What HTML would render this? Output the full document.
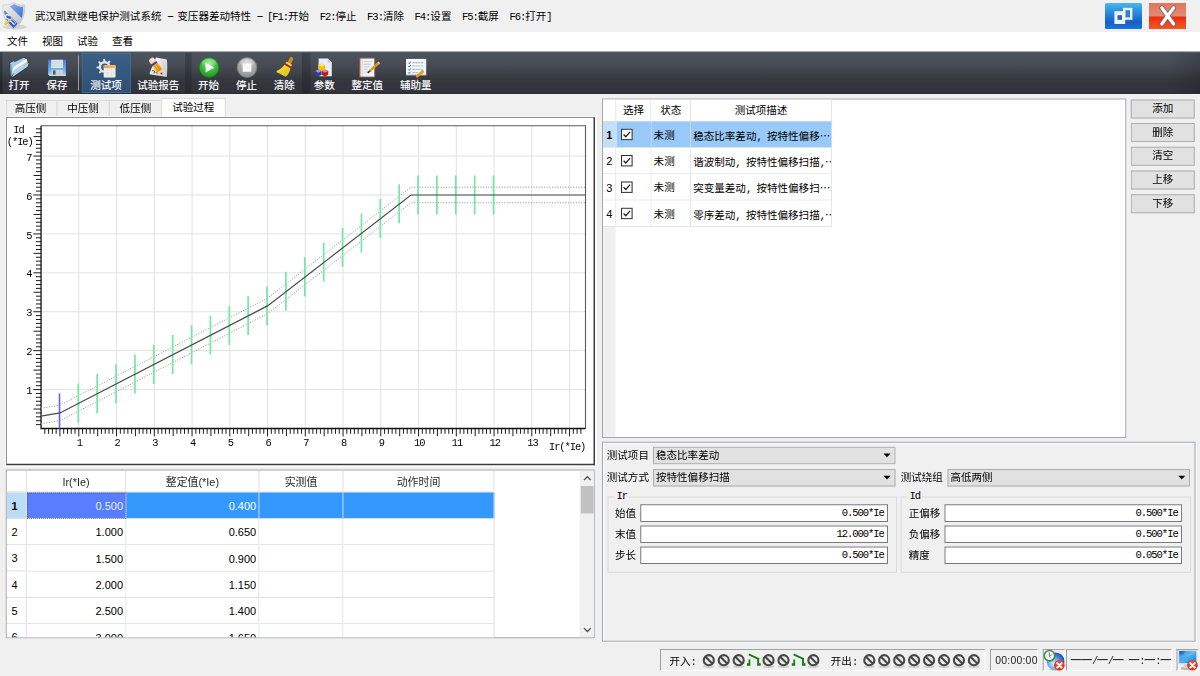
<!DOCTYPE html><html lang="zh"><head><meta charset="utf-8"><title>武汉凯默继电保护测试系统</title><style>html,body{margin:0;padding:0;}body{width:1200px;height:676px;overflow:hidden;background:#f0f0f0;position:relative;}#w{transform:scale(0.25);transform-origin:0 0;opacity:.999;}
#w{position:absolute;left:0;top:0;width:4800px;height:2704px;overflow:hidden;
 font-family:"Liberation Sans","Noto Sans CJK SC",sans-serif;font-size:42.16px;color:#000;line-height:48px;}
.a{position:absolute;white-space:nowrap;}
.mono{font-family:"Liberation Mono","Noto Sans CJK SC",monospace;letter-spacing:-4.2px;}
.tb{position:absolute;top:208px;height:168px;color:#fff;text-align:center;font-size:42.16px;}
.tbl{position:absolute;top:316px;height:48px;line-height:48px;color:#fff;text-align:center;white-space:nowrap;text-shadow:0 0 2.8px rgba(255,255,255,.55);}
.btn{position:absolute;left:4523.2px;width:248px;height:68px;border:4px solid #adadad;background:#e1e1e1;text-align:center;line-height:64px;}
.combo{position:absolute;height:62px;border:4px solid #adadad;background:#e1e1e1;line-height:62px;padding-left:8px;box-sizing:content-box;}
.combo:after{content:"";position:absolute;right:15.6px;top:23.6px;border-left:14px solid transparent;border-right:14px solid transparent;border-top:15.6px solid #000;}
.inp{position:absolute;height:62.4px;border:4px solid #7a7a7a;background:#fff;line-height:62.4px;text-align:right;}
.gb{position:absolute;border:4px solid #dcdcdc;}
.lbl{position:absolute;white-space:nowrap;line-height:48px;}
</style></head><body><div id="w">
<div class="a" style="left:0;top:0;width:4800px;height:128px;background:#f0f0f0"></div>
<div class="a" style="left:0;top:128px;width:4800px;height:80px;background:#fff"></div>
<div class="a" style="left:140px;top:40px;line-height:48px;">武汉凯默继电保护测试系统<span class="mono"> <span style="display:inline-block;position:relative;top:-4px;transform:scaleX(1.9)">-</span> </span>变压器差动特性<span class="mono"> <span style="display:inline-block;position:relative;top:-4px;transform:scaleX(1.9)">-</span> [F1:</span>开始<span class="mono">&nbsp; F2:</span>停止<span class="mono">&nbsp; F3:</span>清除<span class="mono">&nbsp; F4:</span>设置<span class="mono">&nbsp; F5:</span>截屏<span class="mono">&nbsp; F6:</span>打开<span class="mono">]</span></div>
<svg class="a" style="left:4px;top:4px;width:112px;height:120px" viewBox="0 0 28 30">
<defs><linearGradient id="shg" x1="0" y1="0" x2="1" y2="1"><stop offset="0" stop-color="#f4f4f4"/><stop offset="1" stop-color="#b8b8b8"/></linearGradient>
<linearGradient id="shb" x1="0" y1="0" x2="1" y2="1"><stop offset="0" stop-color="#8ab4f0"/><stop offset="1" stop-color="#3a6fd0"/></linearGradient></defs>
<ellipse cx="14" cy="26" rx="12" ry="2.6" fill="#c8c8c8" opacity=".7"/>
<path d="M12.5 1.5 C9 4 5 4.2 2 3.8 C1.2 12 3 22 12.5 28.5 C22 22 24.6 12 23.6 3.8 C20 4.2 16 4 12.5 1.5Z" fill="url(#shg)" stroke="#c4c4c4" stroke-width=".6"/>
<path d="M13.2 2.9 C15.8 4.8 18.8 5.9 21.9 5.9 C22.1 9.8 21.8 13.4 20.8 16.9 L8.8 5.3 C10.4 4.7 11.9 3.9 13.2 2.9Z" fill="url(#shb)"/>
<path d="M3.4 9.6 L16.5 22.4 C15.4 24.1 14.1 25.6 12.6 26.9 C6.4 22.4 3.6 16.4 3.4 9.6Z" fill="#2f63c4"/>
<path d="M3.4 9.6 L8 14 L4.6 16.6 C3.9 14.4 3.5 12 3.4 9.6Z" fill="#5a8ae0"/>
<path d="M8 14.6 a1.9 1.9 0 1 0 -2.2 2.7 L8 18.6 L13 23.2" stroke="#e9eef6" stroke-width="1.25" fill="none" stroke-linecap="round"/>
<path d="M10.6 17.6 L14.8 21.8 L12.9 24" stroke="#c9d6ee" stroke-width=".8" fill="none"/>
<path d="M8.4 19.5 L10.8 17.7" stroke="#d8dce4" stroke-width="1.3" stroke-linecap="round"/>
<path d="M4.5 22.7 L8.2 19.8" stroke="#eebc1c" stroke-width="2.5" stroke-linecap="round"/>
<path d="M4.6 22.1 L7.8 19.6" stroke="#f8dc60" stroke-width=".9" stroke-linecap="round"/>
</svg>
<div class="a" style="left:4420px;top:12px;width:148px;height:104px;border-radius:6px;background:linear-gradient(#45b8f2 0%,#2a8be0 35%,#1560c4 75%,#1a78d8 100%);"></div>
<svg class="a" style="left:4420px;top:12px;width:148px;height:104px" viewBox="0 0 37 26"><rect x="19.2" y="6" width="7" height="9.6" fill="#2a80dc" stroke="#f4f0ea" stroke-width="2.4"/><rect x="9.4" y="8.2" width="10.8" height="12.8" fill="#f4f0ea"/><rect x="12.5" y="12.2" width="4.5" height="4.6" fill="#1c62c4"/></svg>
<div class="a" style="left:4596px;top:12px;width:148px;height:104px;background:linear-gradient(#e4745a 0%,#e08a74 48%,#ee2c08 56%,#f2401c 75%,#f25a20 100%);"></div>
<svg class="a" style="left:4596px;top:12px;width:148px;height:104px" viewBox="0 0 37 26"><path d="M12.8 4.8 L24.6 21 M24.6 4.8 L12.8 21" stroke="#666" stroke-width="5" stroke-linecap="round" opacity=".8"/><path d="M12.8 4.8 L24.6 21 M24.6 4.8 L12.8 21" stroke="#fff" stroke-width="3.2" stroke-linecap="round"/></svg>
<div class="a" style="left:28px;top:142px;line-height:48px">文件</div>
<div class="a" style="left:168px;top:142px;line-height:48px">视图</div>
<div class="a" style="left:308px;top:142px;line-height:48px">试验</div>
<div class="a" style="left:448px;top:142px;line-height:48px">查看</div>
<div class="a" style="left:0;top:206.4px;width:4800px;height:169.6px;background:linear-gradient(#535964 0%,#4d535d 6%,#474c55 30%,#3e424a 50%,#35383f 65%,#32353d 75%,#31343b 94%,#2b2d32 100%)"></div>
<div class="a" style="left:0;top:208px;width:10px;height:166px;background:rgba(0,0,0,.25)"></div>
<div class="a" style="left:740px;top:212px;width:26px;height:160px;background:rgba(20,20,25,.28)"></div>
<div class="a" style="left:1208px;top:212px;width:34px;height:160px;background:rgba(20,20,25,.28)"></div>
<div class="a" style="left:4664px;top:212px;width:136px;height:160px;background:linear-gradient(90deg,rgba(20,20,25,0),rgba(20,20,25,.25))"></div>
<div class="a" style="left:312px;top:222px;width:4px;height:140px;background:#9a9ca0"></div>
<div class="a" style="left:326.8px;top:212px;width:190px;height:154px;background:linear-gradient(#3a5f86,#2f5074);border:3.2px solid #3f74ad"></div>
<div class="tbl" style="left:-44px;width:240px;">打开</div>
<div class="tbl" style="left:108px;width:240px;">保存</div>
<div class="tbl" style="left:304px;width:240px;">测试项</div>
<div class="tbl" style="left:513.2px;width:240px;">试验报告</div>
<div class="tbl" style="left:714.4px;width:240px;">开始</div>
<div class="tbl" style="left:866px;width:240px;">停止</div>
<div class="tbl" style="left:1017.2px;width:240px;">清除</div>
<div class="tbl" style="left:1176.8px;width:240px;">参数</div>
<div class="tbl" style="left:1349.2px;width:240px;">整定值</div>
<div class="tbl" style="left:1542.8px;width:240px;">辅助量</div>
<svg class="a" style="left:0;top:208px;width:1760px;height:168px" viewBox="0 52 440 42"><defs>
<linearGradient id="gFo" x1="0" y1="0" x2="1" y2="1"><stop offset="0" stop-color="#b6def4"/><stop offset="1" stop-color="#9ccbe6"/></linearGradient>
<linearGradient id="gFl" x1="0" y1="0" x2="0" y2="1"><stop offset="0" stop-color="#5a6fd8"/><stop offset=".25" stop-color="#4f8fe8"/><stop offset=".7" stop-color="#6fb4f0"/><stop offset="1" stop-color="#b4e4fc"/></linearGradient>
<radialGradient id="gPl" cx=".5" cy=".3" r=".75"><stop offset="0" stop-color="#8ee48a"/><stop offset=".55" stop-color="#3cb83a"/><stop offset="1" stop-color="#1c8a1c"/></radialGradient>
<radialGradient id="gSt" cx=".5" cy=".3" r=".75"><stop offset="0" stop-color="#d8d8d8"/><stop offset=".6" stop-color="#a4a4a4"/><stop offset="1" stop-color="#8a8a8a"/></radialGradient>
<linearGradient id="gBr" x1="0" y1="0" x2="1" y2="1"><stop offset="0" stop-color="#f8e648"/><stop offset="1" stop-color="#dcc010"/></linearGradient>
<linearGradient id="gPn" x1="0" y1="1" x2="1" y2="0"><stop offset="0" stop-color="#f8c830"/><stop offset="1" stop-color="#e88a10"/></linearGradient>
<linearGradient id="gPa" x1="0" y1="0" x2="1" y2="1"><stop offset="0" stop-color="#ffffff"/><stop offset="1" stop-color="#c8c8cc"/></linearGradient>
</defs><g><path d="M9.4 63L13.2 60.7L15.2 61.1L23.4 57.1L25.6 57.7L27.4 58.2L28.4 61.8L29.8 62.6L27.9 67.3L12 78.2L10.5 77Z" fill="#15181d" opacity=".5"/><path d="M9.9 63.3L13.3 61.3L15.2 61.7L23.3 57.7L25.4 58.3L24 63L12.6 74.6L11 76.6Z" fill="#a4cfe8"/><path d="M9.9 63.3L11 76.6L12.2 73.6L11.4 64.2Z" fill="#6f9cba"/><path d="M13.1 68.4L14.3 66.6L26.6 58.5L27.6 61.9L15.4 70.4L12.4 73.6Z" fill="#f6f6f6"/><path d="M12.2 73.8L14.4 69.8L27.6 61.4L27.7 63.4L15 71.4Z" fill="#c9c9c9"/><path d="M11.8 77.5L15.2 70.3L29.1 62.8L27.5 66.8Z" fill="url(#gFo)"/></g><g><path d="M48.2 58.9H65.9V75.9H49.6L48.2 74.5Z" fill="url(#gFl)"/><rect x="48.2" y="58.9" width="17.7" height="1.1" fill="#4a3a9a" opacity=".7"/><rect x="51.2" y="59.8" width="11.8" height="6.9" fill="#dfe9e4"/><path d="M51.2 61.6h11.8M51.2 63.4h11.8M51.2 65.2h11.8" stroke="#b8c8c0" stroke-width=".5"/><rect x="51.2" y="66.7" width="11.8" height="1.1" fill="#fff"/><rect x="51.4" y="69.8" width="11.8" height="5.2" fill="#cfcfcf"/><rect x="53" y="70.4" width="2.5" height="4.2" fill="#555"/></g><g><circle cx="104.70" cy="67.00" r="4.8" fill="none" stroke="#dfe4e8" stroke-width="2.4"/><path d="M110.09 66.62L111.88 66.50M108.78 70.54L110.13 71.72M105.08 72.39L105.20 74.18M101.16 71.08L99.98 72.43M99.31 67.38L97.52 67.50M100.62 63.46L99.27 62.28M104.32 61.61L104.20 59.82M108.24 62.92L109.42 61.57" stroke="#dfe4e8" stroke-width="2.1" stroke-linecap="round"/><defs><linearGradient id="gTh" x1="0" y1="0" x2="1" y2="0"><stop offset="0" stop-color="#f09468"/><stop offset="1" stop-color="#f8c23c"/></linearGradient></defs><rect x="103.7" y="65.2" width="11.8" height="12.2" rx=".6" fill="#f5f2ee"/><rect x="103.7" y="65.2" width="11.8" height="3" rx=".6" fill="url(#gTh)"/><path d="M103.7 70.4h11.8M103.7 72.6h11.8M103.7 74.8h11.8M107.6 68.2v9.2M111.6 68.2v9.2" stroke="#dcd6ce" stroke-width=".5"/></g><g><path d="M156 57.6L166.9 59.6C167.6 65 167.5 71 166.8 76.9L150.6 74.4C149.6 74.2 149.3 73.4 149.8 72.4Z" fill="#1a1c20" opacity=".35" transform="translate(.5 .5)"/><path d="M156 57.6L166.9 59.6C167.6 65 167.5 71 166.8 76.9L150.6 74.4C149.6 74.2 149.3 73.4 149.8 72.4Z" fill="url(#gPa)"/><path d="M152 70.6l2.6 .4l-.6 2.4M155.4 72.6l3 .4" fill="none" stroke="#555" stroke-width=".9"/><path d="M160.4 60.6l5 .9M161.4 62.8l4.2 .8M162.4 65l3.4 .6M163.6 67.2l2.2 .4" stroke="#c4c4c8" stroke-width=".6"/><g transform="translate(150.5 58.4) rotate(54)"><rect x="0" y="-3.1" width="6.4" height="6.2" rx="2.9" fill="#f6d2b0"/><ellipse cx="2.6" cy="-.8" rx="1.8" ry="1.3" fill="#fff" opacity=".6"/><rect x="5.4" y="-3.1" width="2.3" height="6.2" fill="#3a44b4"/><rect x="7.7" y="-3.1" width="8" height="6.2" fill="url(#gPn)"/><path d="M7.7 -1.1h8M7.7 1.1h8" stroke="#d08008" stroke-width=".6"/><path d="M15.7 -3.1L19.6 0L15.7 3.1Z" fill="#f2d49a"/><path d="M18.1 -1.2L19.9 0L18.1 1.2Z" fill="#2a2a2a"/></g></g><g><circle cx="209.1" cy="67.5" r="9.9" fill="url(#gPl)" stroke="#167a16" stroke-width=".8"/><ellipse cx="209.1" cy="62.6" rx="6.8" ry="3.6" fill="#fff" opacity=".22"/><path d="M205.6 62.6L214.3 67.5L205.6 72.4Z" fill="#f4f4f4"/></g><g><circle cx="247" cy="67.5" r="9.9" fill="url(#gSt)" stroke="#7c7c7c" stroke-width=".8"/><ellipse cx="247" cy="62.6" rx="6.8" ry="3.6" fill="#fff" opacity=".25"/><rect x="242.7" y="63.4" width="8.6" height="8.4" fill="#f8f8f8"/></g><g><path d="M291.4 58.9L289.4 62.6" stroke="#d88c1c" stroke-width="3.6" stroke-linecap="round"/><path d="M286.6 61.8L292 64.8L290.8 67.2L285 63.9Z" fill="#f4e23a"/><path d="M284.7 64.4L290.5 67.7C290.2 70.4 289 73.4 286.4 76.3C285.9 76.8 285.2 76.7 284.6 76.3L277.4 72.6C276.5 72.1 276.3 71.3 277 70.8C280.4 69 283.2 67 284.7 64.4Z" fill="url(#gBr)"/><path d="M280.6 73.6L284.6 68.4M284 75.4L287.2 69.8" stroke="#d0ac08" stroke-width=".5" opacity=".7"/><path d="M285 63.9L290.8 67.3" stroke="#c81c1c" stroke-width="2"/></g><g><path d="M318.6 58.4H327.8L331.8 62.6V76.2H318.6Z" fill="#ececf6"/><path d="M327.8 58.4V62.6H331.8Z" fill="#c8c8dc"/><path d="M321.6 63.4l3.4 1.6v4l-3.4 1.8l-3.4 -1.8v-4Z" fill="#f4c010"/><path d="M321.6 63.4l3.4 1.6l-3.4 1.8l-3.4 -1.8Z" fill="#fce878"/><path d="M318.4 69.6l3.2 1.5v3.7l-3.2 1.7l-3.2 -1.7v-3.7Z" fill="#3a3a9a"/><path d="M318.4 69.6l3.2 1.5l-3.2 1.7l-3.2 -1.7Z" fill="#9a9ad8"/><path d="M325 69.6l3.2 1.5v3.7l-3.2 1.7l-3.2 -1.7v-3.7Z" fill="#c01818"/><path d="M325 69.6l3.2 1.5l-3.2 1.7l-3.2 -1.7Z" fill="#f08080"/></g><g><rect x="359" y="57.6" width="16.2" height="20" rx="1.2" fill="#8a5c40"/><rect x="360.4" y="58.6" width="13.8" height="18" fill="#f2f4f6"/><path d="M362 58.6v18" stroke="#e8a0a0" stroke-width=".5"/><path d="M363.6 61.6h8M363.6 64.2h7M363.6 66.8h6M363.6 69.4h4M363.6 72h6" stroke="#a8c4e0" stroke-width=".8"/><path d="M378.6 63L369.6 71.2" stroke="#e8941c" stroke-width="2.4"/><path d="M369.9 70.9L367.8 72.8" stroke="#333" stroke-width="1.6"/><path d="M379.4 62.3L378.2 63.4" stroke="#f4d060" stroke-width="2.4"/></g><g><rect x="406" y="58.9" width="20.2" height="16.2" fill="#f6f6f6"/><rect x="406" y="74.4" width="20.2" height="1" fill="#b8b8b8"/><path d="M408.2 62.6l1 1l1.6 -2M408.2 66l1 1l1.6 -2M408.2 69.4l1 1l1.6 -2M408.2 72.6l1 .8l1.6 -1.8" stroke="#2a7ad8" stroke-width="1" fill="none"/><path d="M412.6 62.6h11.6M412.6 66h11.6M412.6 69.4h10M412.6 72.6h6" stroke="#a4bcd0" stroke-width="1.1" stroke-dasharray="2.2 .6"/><path d="M422.6 71.6L417.2 76.2" stroke="#f09418" stroke-width="2.8" stroke-linecap="round"/></g></svg>
<div class="a" style="left:25.2px;top:400px;width:204px;height:65.6px;background:#f0f0f0;border:4px solid #d9d9d9;border-bottom:none;box-sizing:border-box;text-align:center;line-height:62px"><span style="position:relative;left:-4.8px">高压侧</span></div>
<div class="a" style="left:226.4px;top:400px;width:212px;height:65.6px;background:#f0f0f0;border:4px solid #d9d9d9;border-bottom:none;box-sizing:border-box;text-align:center;line-height:62px">中压侧</div>
<div class="a" style="left:435.6px;top:400px;width:212px;height:65.6px;background:#f0f0f0;border:4px solid #d9d9d9;border-bottom:none;box-sizing:border-box;text-align:center;line-height:62px">低压侧</div>
<div class="a" style="left:19.6px;top:464.4px;width:2366.4px;height:1402.4px;background:#fff"></div>
<div class="a" style="left:23.6px;top:468.4px;width:2356px;height:1392.4px;background:#f0f0f0"></div>
<div class="a" style="left:19.6px;top:464.4px;width:2360px;height:1396.4px;background:#f9f9f9"></div>
<div class="a" style="left:23.6px;top:468.4px;width:2356px;height:1392.4px;box-sizing:border-box;background:#fff;border-top:4px solid #8e8e8e;border-left:4px solid #8e8e8e;border-right:6.8px solid #3e3e3e;border-bottom:6.8px solid #3e3e3e"></div>
<div class="a" style="left:643.2px;top:392px;width:260px;height:76px;background:#fff;border:4px solid #d9d9d9;border-bottom:none;box-sizing:border-box;text-align:center;line-height:68px">试验过程</div>
<svg class="a" style="left:0;top:0;width:2400px;height:1864px" viewBox="0 0 600 466" font-family="Liberation Mono, monospace" font-size="10.4"><path d="M78.80 125.70V428.50M116.55 125.70V428.50M154.30 125.70V428.50M192.05 125.70V428.50M229.80 125.70V428.50M267.55 125.70V428.50M305.30 125.70V428.50M343.05 125.70V428.50M380.80 125.70V428.50M418.55 125.70V428.50M456.30 125.70V428.50M494.05 125.70V428.50M531.80 125.70V428.50M569.55 125.70V428.50M41.05 389.58H585.50M41.05 350.66H585.50M41.05 311.74H585.50M41.05 272.82H585.50M41.05 233.90H585.50M41.05 194.98H585.50M41.05 156.06H585.50" stroke="#e2e2e2" stroke-width="1" fill="none"/><path d="M41.05 125.70H585.50V428.50" stroke="#5a5a5a" stroke-width="1.1" fill="none"/><path d="M44.82 428.50v5.30M48.60 428.50v5.30M52.38 428.50v5.30M56.15 428.50v5.30M59.92 428.50v7.70M63.70 428.50v5.30M67.47 428.50v5.30M71.25 428.50v5.30M75.03 428.50v5.30M78.80 428.50v7.90M82.58 428.50v5.30M86.35 428.50v5.30M90.12 428.50v5.30M93.90 428.50v5.30M97.67 428.50v7.70M101.45 428.50v5.30M105.22 428.50v5.30M109.00 428.50v5.30M112.77 428.50v5.30M116.55 428.50v7.90M120.33 428.50v5.30M124.10 428.50v5.30M127.87 428.50v5.30M131.65 428.50v5.30M135.43 428.50v7.70M139.20 428.50v5.30M142.98 428.50v5.30M146.75 428.50v5.30M150.52 428.50v5.30M154.30 428.50v7.90M158.07 428.50v5.30M161.85 428.50v5.30M165.62 428.50v5.30M169.40 428.50v5.30M173.18 428.50v7.70M176.95 428.50v5.30M180.73 428.50v5.30M184.50 428.50v5.30M188.27 428.50v5.30M192.05 428.50v7.90M195.82 428.50v5.30M199.60 428.50v5.30M203.38 428.50v5.30M207.15 428.50v5.30M210.93 428.50v7.70M214.70 428.50v5.30M218.48 428.50v5.30M222.25 428.50v5.30M226.03 428.50v5.30M229.80 428.50v7.90M233.57 428.50v5.30M237.35 428.50v5.30M241.12 428.50v5.30M244.90 428.50v5.30M248.68 428.50v7.70M252.45 428.50v5.30M256.23 428.50v5.30M260.00 428.50v5.30M263.78 428.50v5.30M267.55 428.50v7.90M271.32 428.50v5.30M275.10 428.50v5.30M278.88 428.50v5.30M282.65 428.50v5.30M286.43 428.50v7.70M290.20 428.50v5.30M293.98 428.50v5.30M297.75 428.50v5.30M301.53 428.50v5.30M305.30 428.50v7.90M309.07 428.50v5.30M312.85 428.50v5.30M316.62 428.50v5.30M320.40 428.50v5.30M324.18 428.50v7.70M327.95 428.50v5.30M331.73 428.50v5.30M335.50 428.50v5.30M339.28 428.50v5.30M343.05 428.50v7.90M346.82 428.50v5.30M350.60 428.50v5.30M354.38 428.50v5.30M358.15 428.50v5.30M361.93 428.50v7.70M365.70 428.50v5.30M369.47 428.50v5.30M373.25 428.50v5.30M377.03 428.50v5.30M380.80 428.50v7.90M384.57 428.50v5.30M388.35 428.50v5.30M392.13 428.50v5.30M395.90 428.50v5.30M399.68 428.50v7.70M403.45 428.50v5.30M407.22 428.50v5.30M411.00 428.50v5.30M414.78 428.50v5.30M418.55 428.50v7.90M422.32 428.50v5.30M426.10 428.50v5.30M429.88 428.50v5.30M433.65 428.50v5.30M437.43 428.50v7.70M441.20 428.50v5.30M444.97 428.50v5.30M448.75 428.50v5.30M452.53 428.50v5.30M456.30 428.50v7.90M460.07 428.50v5.30M463.85 428.50v5.30M467.63 428.50v5.30M471.40 428.50v5.30M475.18 428.50v7.70M478.95 428.50v5.30M482.72 428.50v5.30M486.50 428.50v5.30M490.28 428.50v5.30M494.05 428.50v7.90M497.82 428.50v5.30M501.60 428.50v5.30M505.38 428.50v5.30M509.15 428.50v5.30M512.92 428.50v7.70M516.70 428.50v5.30M520.47 428.50v5.30M524.25 428.50v5.30M528.02 428.50v5.30M531.80 428.50v7.90M535.57 428.50v5.30M539.35 428.50v5.30M543.12 428.50v5.30M546.90 428.50v5.30M550.67 428.50v7.70M554.45 428.50v5.30M558.22 428.50v5.30M562.00 428.50v5.30M565.77 428.50v5.30M569.55 428.50v7.90M573.32 428.50v5.30M577.10 428.50v5.30M580.88 428.50v5.30M41.05 424.61h-5.10M41.05 420.72h-5.10M41.05 416.82h-5.10M41.05 412.93h-5.10M41.05 409.04h-7.50M41.05 405.15h-5.10M41.05 401.26h-5.10M41.05 397.36h-5.10M41.05 393.47h-5.10M41.05 389.58h-7.70M41.05 385.69h-5.10M41.05 381.80h-5.10M41.05 377.90h-5.10M41.05 374.01h-5.10M41.05 370.12h-7.50M41.05 366.23h-5.10M41.05 362.34h-5.10M41.05 358.44h-5.10M41.05 354.55h-5.10M41.05 350.66h-7.70M41.05 346.77h-5.10M41.05 342.88h-5.10M41.05 338.98h-5.10M41.05 335.09h-5.10M41.05 331.20h-7.50M41.05 327.31h-5.10M41.05 323.42h-5.10M41.05 319.52h-5.10M41.05 315.63h-5.10M41.05 311.74h-7.70M41.05 307.85h-5.10M41.05 303.96h-5.10M41.05 300.06h-5.10M41.05 296.17h-5.10M41.05 292.28h-7.50M41.05 288.39h-5.10M41.05 284.50h-5.10M41.05 280.60h-5.10M41.05 276.71h-5.10M41.05 272.82h-7.70M41.05 268.93h-5.10M41.05 265.04h-5.10M41.05 261.14h-5.10M41.05 257.25h-5.10M41.05 253.36h-7.50M41.05 249.47h-5.10M41.05 245.58h-5.10M41.05 241.68h-5.10M41.05 237.79h-5.10M41.05 233.90h-7.70M41.05 230.01h-5.10M41.05 226.12h-5.10M41.05 222.22h-5.10M41.05 218.33h-5.10M41.05 214.44h-7.50M41.05 210.55h-5.10M41.05 206.66h-5.10M41.05 202.76h-5.10M41.05 198.87h-5.10M41.05 194.98h-7.70M41.05 191.09h-5.10M41.05 187.20h-5.10M41.05 183.30h-5.10M41.05 179.41h-5.10M41.05 175.52h-7.50M41.05 171.63h-5.10M41.05 167.74h-5.10M41.05 163.84h-5.10M41.05 159.95h-5.10M41.05 156.06h-7.70M41.05 152.17h-5.10M41.05 148.28h-5.10M41.05 144.38h-5.10M41.05 140.49h-5.10M41.05 136.60h-7.50M41.05 132.71h-5.10M41.05 128.82h-5.10" stroke="#1c1c1c" stroke-width="1" fill="none"/><path d="M41.05 125.70V428.50H585.50" stroke="#111" stroke-width="1.3" fill="none"/><polyline points="41.05,408.26 59.92,405.15 267.55,298.12 411.00,187.20 585.50,187.20" stroke="#8c8c8c" stroke-width="1" stroke-dasharray="1 1.65" fill="none"/><polyline points="41.05,423.83 59.92,420.72 267.55,313.69 411.00,202.76 585.50,202.76" stroke="#8c8c8c" stroke-width="1" stroke-dasharray="1 1.65" fill="none"/><path d="M78.30 383.74V422.66M97.17 374.01V412.93M116.05 364.28V403.20M134.93 354.55V393.47M153.80 344.82V383.74M172.68 335.09V374.01M191.55 325.36V364.28M210.43 315.63V354.55M229.30 305.90V344.82M248.18 296.17V335.09M267.05 286.44V325.36M285.93 271.85V310.77M304.80 257.25V296.17M323.68 242.66V281.58M342.55 228.06V266.98M361.43 213.47V252.39M380.30 198.87V237.79M399.18 184.28V223.20M418.05 175.52V214.44M436.93 175.52V214.44M455.80 175.52V214.44M474.68 175.52V214.44M493.55 175.52V214.44" stroke="#72e8a2" stroke-width="1.7" fill="none"/><path d="M59.52 393.47V428.50" stroke="#6060ff" stroke-width="1.6" fill="none"/><polyline points="41.05,416.05 59.92,412.93 267.55,305.90 411.00,194.98 585.50,194.98" stroke="#4a4a4a" stroke-width="1.2" fill="none"/><text x="79.40" y="446.3" text-anchor="middle" letter-spacing="-1.1">1</text><text x="117.15" y="446.3" text-anchor="middle" letter-spacing="-1.1">2</text><text x="154.90" y="446.3" text-anchor="middle" letter-spacing="-1.1">3</text><text x="192.65" y="446.3" text-anchor="middle" letter-spacing="-1.1">4</text><text x="230.40" y="446.3" text-anchor="middle" letter-spacing="-1.1">5</text><text x="268.15" y="446.3" text-anchor="middle" letter-spacing="-1.1">6</text><text x="305.90" y="446.3" text-anchor="middle" letter-spacing="-1.1">7</text><text x="343.65" y="446.3" text-anchor="middle" letter-spacing="-1.1">8</text><text x="381.40" y="446.3" text-anchor="middle" letter-spacing="-1.1">9</text><text x="419.15" y="446.3" text-anchor="middle" letter-spacing="-1.1">10</text><text x="456.90" y="446.3" text-anchor="middle" letter-spacing="-1.1">11</text><text x="494.65" y="446.3" text-anchor="middle" letter-spacing="-1.1">12</text><text x="532.40" y="446.3" text-anchor="middle" letter-spacing="-1.1">13</text><text x="32.4" y="394.18" text-anchor="end">1</text><text x="32.4" y="355.26" text-anchor="end">2</text><text x="32.4" y="316.34" text-anchor="end">3</text><text x="32.4" y="277.42" text-anchor="end">4</text><text x="32.4" y="238.50" text-anchor="end">5</text><text x="32.4" y="199.58" text-anchor="end">6</text><text x="32.4" y="160.66" text-anchor="end">7</text><text x="13.2" y="133.3" letter-spacing="-0.8">Id</text><text x="6.8" y="144.8" letter-spacing="-1.05">(*Ie)</text><text x="549" y="449.6" letter-spacing="-1.05">Ir(*Ie)</text></svg>
<div class="a" style="left:23.2px;top:1878.4px;width:2356px;height:674.4px;box-sizing:border-box;background:#fff;border:4px solid #a3a6ad;overflow:hidden" id="ltab">
<div class="a" style="left:0;top:0;width:1951.2px;height:84px;border-bottom:4px solid #dedede"></div><div class="a" style="left:0px;top:0;width:75.6px;height:84px;border-right:4.8px solid #dedede;text-align:center;line-height:90px;color:#2a2a2a;font-size:43.6px"></div><div class="a" style="left:80.4px;top:0;width:393.2px;height:84px;border-right:4.8px solid #dedede;text-align:center;line-height:90px;color:#2a2a2a;font-size:43.6px">Ir(*Ie)</div><div class="a" style="left:478.4px;top:0;width:528px;height:84px;border-right:4.8px solid #dedede;text-align:center;line-height:90px;color:#2a2a2a;font-size:43.6px">整定值(*Ie)</div><div class="a" style="left:1011.2px;top:0;width:331.2px;height:84px;border-right:4.8px solid #dedede;text-align:center;line-height:90px;color:#2a2a2a;font-size:43.6px">实测值</div><div class="a" style="left:1347.2px;top:0;width:599.2px;height:84px;border-right:4.8px solid #dedede;text-align:center;line-height:90px;color:#2a2a2a;font-size:43.6px">动作时间</div><div class="a" style="left:0;top:88px;height:101px;border-right:4.8px solid #dedede;border-bottom:4.4px solid #dedede;box-sizing:content-box;background:#bcdcf4;line-height:105.4px;padding-left:18.4px;width:57.2px;font-size:44px;font-weight:bold;">1</div><div class="a" style="left:80.4px;top:88px;width:398px;height:105.4px;border-right:4.8px solid #dedede;border-bottom:4.4px solid #dedede;background:#587eff;color:#e6ecff;text-align:right;line-height:107.4px;font-size:44px;padding-right:9.6px;box-sizing:border-box;outline:4px dotted rgba(70,60,30,.65);outline-offset:-4px;">0.500</div><div class="a" style="left:478.4px;top:88px;width:532.8px;height:105.4px;border-right:4.8px solid #dedede;border-bottom:4.4px solid #dedede;background:#3399ff;color:#fff;text-align:right;line-height:107.4px;font-size:44px;padding-right:9.6px;box-sizing:border-box;">0.400</div><div class="a" style="left:1011.2px;top:88px;width:336px;height:105.4px;border-right:4.8px solid #dedede;border-bottom:4.4px solid #dedede;background:#3399ff;color:#fff;text-align:right;line-height:107.4px;font-size:44px;padding-right:9.6px;box-sizing:border-box;"></div><div class="a" style="left:1347.2px;top:88px;width:604px;height:105.4px;border-right:4.8px solid #dedede;border-bottom:4.4px solid #dedede;background:#3399ff;color:#fff;text-align:right;line-height:107.4px;font-size:44px;padding-right:9.6px;box-sizing:border-box;"></div><div class="a" style="left:0;top:193.4px;height:101px;border-right:4.8px solid #dedede;border-bottom:4.4px solid #dedede;box-sizing:content-box;background:#fff;line-height:105.4px;padding-left:18.4px;width:57.2px;font-size:44px;">2</div><div class="a" style="left:80.4px;top:193.4px;width:398px;height:105.4px;border-right:4.8px solid #dedede;border-bottom:4.4px solid #dedede;background:#fff;color:#000;text-align:right;line-height:107.4px;font-size:44px;padding-right:9.6px;box-sizing:border-box;">1.000</div><div class="a" style="left:478.4px;top:193.4px;width:532.8px;height:105.4px;border-right:4.8px solid #dedede;border-bottom:4.4px solid #dedede;background:#fff;color:#000;text-align:right;line-height:107.4px;font-size:44px;padding-right:9.6px;box-sizing:border-box;">0.650</div><div class="a" style="left:1011.2px;top:193.4px;width:336px;height:105.4px;border-right:4.8px solid #dedede;border-bottom:4.4px solid #dedede;background:#fff;color:#000;text-align:right;line-height:107.4px;font-size:44px;padding-right:9.6px;box-sizing:border-box;"></div><div class="a" style="left:1347.2px;top:193.4px;width:604px;height:105.4px;border-right:4.8px solid #dedede;border-bottom:4.4px solid #dedede;background:#fff;color:#000;text-align:right;line-height:107.4px;font-size:44px;padding-right:9.6px;box-sizing:border-box;"></div><div class="a" style="left:0;top:298.8px;height:101px;border-right:4.8px solid #dedede;border-bottom:4.4px solid #dedede;box-sizing:content-box;background:#fff;line-height:105.4px;padding-left:18.4px;width:57.2px;font-size:44px;">3</div><div class="a" style="left:80.4px;top:298.8px;width:398px;height:105.4px;border-right:4.8px solid #dedede;border-bottom:4.4px solid #dedede;background:#fff;color:#000;text-align:right;line-height:107.4px;font-size:44px;padding-right:9.6px;box-sizing:border-box;">1.500</div><div class="a" style="left:478.4px;top:298.8px;width:532.8px;height:105.4px;border-right:4.8px solid #dedede;border-bottom:4.4px solid #dedede;background:#fff;color:#000;text-align:right;line-height:107.4px;font-size:44px;padding-right:9.6px;box-sizing:border-box;">0.900</div><div class="a" style="left:1011.2px;top:298.8px;width:336px;height:105.4px;border-right:4.8px solid #dedede;border-bottom:4.4px solid #dedede;background:#fff;color:#000;text-align:right;line-height:107.4px;font-size:44px;padding-right:9.6px;box-sizing:border-box;"></div><div class="a" style="left:1347.2px;top:298.8px;width:604px;height:105.4px;border-right:4.8px solid #dedede;border-bottom:4.4px solid #dedede;background:#fff;color:#000;text-align:right;line-height:107.4px;font-size:44px;padding-right:9.6px;box-sizing:border-box;"></div><div class="a" style="left:0;top:404.2px;height:101px;border-right:4.8px solid #dedede;border-bottom:4.4px solid #dedede;box-sizing:content-box;background:#fff;line-height:105.4px;padding-left:18.4px;width:57.2px;font-size:44px;">4</div><div class="a" style="left:80.4px;top:404.2px;width:398px;height:105.4px;border-right:4.8px solid #dedede;border-bottom:4.4px solid #dedede;background:#fff;color:#000;text-align:right;line-height:107.4px;font-size:44px;padding-right:9.6px;box-sizing:border-box;">2.000</div><div class="a" style="left:478.4px;top:404.2px;width:532.8px;height:105.4px;border-right:4.8px solid #dedede;border-bottom:4.4px solid #dedede;background:#fff;color:#000;text-align:right;line-height:107.4px;font-size:44px;padding-right:9.6px;box-sizing:border-box;">1.150</div><div class="a" style="left:1011.2px;top:404.2px;width:336px;height:105.4px;border-right:4.8px solid #dedede;border-bottom:4.4px solid #dedede;background:#fff;color:#000;text-align:right;line-height:107.4px;font-size:44px;padding-right:9.6px;box-sizing:border-box;"></div><div class="a" style="left:1347.2px;top:404.2px;width:604px;height:105.4px;border-right:4.8px solid #dedede;border-bottom:4.4px solid #dedede;background:#fff;color:#000;text-align:right;line-height:107.4px;font-size:44px;padding-right:9.6px;box-sizing:border-box;"></div><div class="a" style="left:0;top:509.6px;height:101px;border-right:4.8px solid #dedede;border-bottom:4.4px solid #dedede;box-sizing:content-box;background:#fff;line-height:105.4px;padding-left:18.4px;width:57.2px;font-size:44px;">5</div><div class="a" style="left:80.4px;top:509.6px;width:398px;height:105.4px;border-right:4.8px solid #dedede;border-bottom:4.4px solid #dedede;background:#fff;color:#000;text-align:right;line-height:107.4px;font-size:44px;padding-right:9.6px;box-sizing:border-box;">2.500</div><div class="a" style="left:478.4px;top:509.6px;width:532.8px;height:105.4px;border-right:4.8px solid #dedede;border-bottom:4.4px solid #dedede;background:#fff;color:#000;text-align:right;line-height:107.4px;font-size:44px;padding-right:9.6px;box-sizing:border-box;">1.400</div><div class="a" style="left:1011.2px;top:509.6px;width:336px;height:105.4px;border-right:4.8px solid #dedede;border-bottom:4.4px solid #dedede;background:#fff;color:#000;text-align:right;line-height:107.4px;font-size:44px;padding-right:9.6px;box-sizing:border-box;"></div><div class="a" style="left:1347.2px;top:509.6px;width:604px;height:105.4px;border-right:4.8px solid #dedede;border-bottom:4.4px solid #dedede;background:#fff;color:#000;text-align:right;line-height:107.4px;font-size:44px;padding-right:9.6px;box-sizing:border-box;"></div><div class="a" style="left:0;top:615px;height:101px;border-right:4.8px solid #dedede;border-bottom:4.4px solid #dedede;box-sizing:content-box;background:#fff;line-height:105.4px;padding-left:18.4px;width:57.2px;font-size:44px;">6</div><div class="a" style="left:80.4px;top:615px;width:398px;height:105.4px;border-right:4.8px solid #dedede;border-bottom:4.4px solid #dedede;background:#fff;color:#000;text-align:right;line-height:107.4px;font-size:44px;padding-right:9.6px;box-sizing:border-box;">3.000</div><div class="a" style="left:478.4px;top:615px;width:532.8px;height:105.4px;border-right:4.8px solid #dedede;border-bottom:4.4px solid #dedede;background:#fff;color:#000;text-align:right;line-height:107.4px;font-size:44px;padding-right:9.6px;box-sizing:border-box;">1.650</div><div class="a" style="left:1011.2px;top:615px;width:336px;height:105.4px;border-right:4.8px solid #dedede;border-bottom:4.4px solid #dedede;background:#fff;color:#000;text-align:right;line-height:107.4px;font-size:44px;padding-right:9.6px;box-sizing:border-box;"></div><div class="a" style="left:1347.2px;top:615px;width:604px;height:105.4px;border-right:4.8px solid #dedede;border-bottom:4.4px solid #dedede;background:#fff;color:#000;text-align:right;line-height:107.4px;font-size:44px;padding-right:9.6px;box-sizing:border-box;"></div>
<div class="a" style="left:2292px;top:0;width:60px;height:668px;background:#f0f0f0"></div>
<div class="a" style="left:2296px;top:62px;width:52px;height:110px;background:#c1c1c1"></div>
<svg class="a" style="left:2292px;top:0;width:60px;height:668px" viewBox="0 0 15 167"><path d="M4.2 9.6L7.6 6.2L11 9.6" stroke="#505050" stroke-width="1.3" fill="none"/><path d="M4.2 157.6L7.6 161L11 157.6" stroke="#505050" stroke-width="1.3" fill="none"/></svg>
</div>
<div class="a" style="left:2408px;top:394.4px;width:2096.8px;height:1358px;box-sizing:border-box;background:#fff;border:4px solid #a3a6ad;overflow:hidden">
<div class="a" style="left:0;top:0;width:50.4px;height:1348px;background:#f0f0f0"></div><div class="a" style="left:0px;top:0;width:50.4px;height:86.4px;background:#fff;border-right:3.2px solid #dcdcdc;border-bottom:3.2px solid #dcdcdc;text-align:center;line-height:90px"></div><div class="a" style="left:53.6px;top:0;width:136.8px;height:86.4px;background:#fff;border-right:3.2px solid #dcdcdc;border-bottom:3.2px solid #dcdcdc;text-align:center;line-height:90px">选择</div><div class="a" style="left:193.6px;top:0;width:155.2px;height:86.4px;background:#fff;border-right:3.2px solid #dcdcdc;border-bottom:3.2px solid #dcdcdc;text-align:center;line-height:90px">状态</div><div class="a" style="left:352px;top:0;width:560px;height:86.4px;background:#fff;border-right:3.2px solid #dcdcdc;border-bottom:3.2px solid #dcdcdc;text-align:center;line-height:90px">测试项描述</div><div class="a" style="left:0;top:87.6px;width:50.4px;height:102.2px;background:#c4e0f8;border-right:3.2px solid #dcdcdc;border-bottom:3.2px solid #dcdcdc;line-height:107.4px;text-align:center;font-size:44px;font-weight:bold;">1</div><div class="a" style="left:53.6px;top:87.6px;width:140px;height:105.4px;background:#99c9f9;border-right:3.2px solid #dcdcdc;border-bottom:3.2px solid #dcdcdc;line-height:107.4px;padding-left:8.8px;box-sizing:border-box;overflow:hidden"></div><div class="a" style="left:193.6px;top:87.6px;width:158.4px;height:105.4px;background:#99c9f9;border-right:3.2px solid #dcdcdc;border-bottom:3.2px solid #dcdcdc;line-height:107.4px;padding-left:8.8px;box-sizing:border-box;overflow:hidden">未测</div><div class="a" style="left:352px;top:87.6px;width:563.2px;height:105.4px;background:#99c9f9;border-right:3.2px solid #dcdcdc;border-bottom:3.2px solid #dcdcdc;line-height:107.4px;padding-left:8.8px;box-sizing:border-box;overflow:hidden">稳态比率差动<span class="mono">, </span>按特性偏移<span style="font-family:Noto Sans CJK SC,sans-serif">…</span></div><svg class="a" style="left:70.4px;top:114.4px;width:50.4px;height:50.4px" viewBox="0 0 12.6 12.6"><rect x="1" y="1" width="10.6" height="10.4" fill="#fff" stroke="#333" stroke-width="1.05"/><path d="M3.1 6.2L5.3 8.5L9.6 3.6" stroke="#222" stroke-width="1.25" fill="none"/></svg><div class="a" style="left:0;top:193px;width:50.4px;height:102.2px;background:#fff;border-right:3.2px solid #dcdcdc;border-bottom:3.2px solid #dcdcdc;line-height:107.4px;text-align:center;font-size:44px;">2</div><div class="a" style="left:53.6px;top:193px;width:140px;height:105.4px;background:#fff;border-right:3.2px solid #dcdcdc;border-bottom:3.2px solid #dcdcdc;line-height:107.4px;padding-left:8.8px;box-sizing:border-box;overflow:hidden"></div><div class="a" style="left:193.6px;top:193px;width:158.4px;height:105.4px;background:#fff;border-right:3.2px solid #dcdcdc;border-bottom:3.2px solid #dcdcdc;line-height:107.4px;padding-left:8.8px;box-sizing:border-box;overflow:hidden">未测</div><div class="a" style="left:352px;top:193px;width:563.2px;height:105.4px;background:#fff;border-right:3.2px solid #dcdcdc;border-bottom:3.2px solid #dcdcdc;line-height:107.4px;padding-left:8.8px;box-sizing:border-box;overflow:hidden">谐波制动<span class="mono">, </span>按特性偏移扫描<span class="mono">,</span><span style="letter-spacing:-20px;font-family:Noto Sans CJK SC,sans-serif">…</span></div><svg class="a" style="left:70.4px;top:219.8px;width:50.4px;height:50.4px" viewBox="0 0 12.6 12.6"><rect x="1" y="1" width="10.6" height="10.4" fill="#fff" stroke="#333" stroke-width="1.05"/><path d="M3.1 6.2L5.3 8.5L9.6 3.6" stroke="#222" stroke-width="1.25" fill="none"/></svg><div class="a" style="left:0;top:298.4px;width:50.4px;height:102.2px;background:#fff;border-right:3.2px solid #dcdcdc;border-bottom:3.2px solid #dcdcdc;line-height:107.4px;text-align:center;font-size:44px;">3</div><div class="a" style="left:53.6px;top:298.4px;width:140px;height:105.4px;background:#fff;border-right:3.2px solid #dcdcdc;border-bottom:3.2px solid #dcdcdc;line-height:107.4px;padding-left:8.8px;box-sizing:border-box;overflow:hidden"></div><div class="a" style="left:193.6px;top:298.4px;width:158.4px;height:105.4px;background:#fff;border-right:3.2px solid #dcdcdc;border-bottom:3.2px solid #dcdcdc;line-height:107.4px;padding-left:8.8px;box-sizing:border-box;overflow:hidden">未测</div><div class="a" style="left:352px;top:298.4px;width:563.2px;height:105.4px;background:#fff;border-right:3.2px solid #dcdcdc;border-bottom:3.2px solid #dcdcdc;line-height:107.4px;padding-left:8.8px;box-sizing:border-box;overflow:hidden">突变量差动<span class="mono">, </span>按特性偏移扫<span style="font-family:Noto Sans CJK SC,sans-serif">…</span></div><svg class="a" style="left:70.4px;top:325.2px;width:50.4px;height:50.4px" viewBox="0 0 12.6 12.6"><rect x="1" y="1" width="10.6" height="10.4" fill="#fff" stroke="#333" stroke-width="1.05"/><path d="M3.1 6.2L5.3 8.5L9.6 3.6" stroke="#222" stroke-width="1.25" fill="none"/></svg><div class="a" style="left:0;top:403.8px;width:50.4px;height:102.2px;background:#fff;border-right:3.2px solid #dcdcdc;border-bottom:3.2px solid #dcdcdc;line-height:107.4px;text-align:center;font-size:44px;">4</div><div class="a" style="left:53.6px;top:403.8px;width:140px;height:105.4px;background:#fff;border-right:3.2px solid #dcdcdc;border-bottom:3.2px solid #dcdcdc;line-height:107.4px;padding-left:8.8px;box-sizing:border-box;overflow:hidden"></div><div class="a" style="left:193.6px;top:403.8px;width:158.4px;height:105.4px;background:#fff;border-right:3.2px solid #dcdcdc;border-bottom:3.2px solid #dcdcdc;line-height:107.4px;padding-left:8.8px;box-sizing:border-box;overflow:hidden">未测</div><div class="a" style="left:352px;top:403.8px;width:563.2px;height:105.4px;background:#fff;border-right:3.2px solid #dcdcdc;border-bottom:3.2px solid #dcdcdc;line-height:107.4px;padding-left:8.8px;box-sizing:border-box;overflow:hidden">零序差动<span class="mono">, </span>按特性偏移扫描<span class="mono">,</span><span style="letter-spacing:-20px;font-family:Noto Sans CJK SC,sans-serif">…</span></div><svg class="a" style="left:70.4px;top:430.6px;width:50.4px;height:50.4px" viewBox="0 0 12.6 12.6"><rect x="1" y="1" width="10.6" height="10.4" fill="#fff" stroke="#333" stroke-width="1.05"/><path d="M3.1 6.2L5.3 8.5L9.6 3.6" stroke="#222" stroke-width="1.25" fill="none"/></svg>
</div>
<div class="btn" style="top:397.6px">添加</div>
<div class="btn" style="top:492.4px">删除</div>
<div class="btn" style="top:587.2px">清空</div>
<div class="btn" style="top:682px">上移</div>
<div class="btn" style="top:776.8px">下移</div>
<div class="a" style="left:2408px;top:1767.2px;width:2373.6px;height:800px;box-sizing:border-box;border:4px solid #a3a6ad;box-shadow:inset 4px 4px 0 #fff, 4px 4px 0 #fff"></div>
<div class="lbl" style="left:2427.2px;top:1797.6px">测试项目</div>
<div class="combo" style="left:2612px;top:1786.8px;width:954px">稳态比率差动</div>
<div class="lbl" style="left:2427.2px;top:1886.4px">测试方式</div>
<div class="combo" style="left:2612px;top:1875.6px;width:954px">按特性偏移扫描</div>
<div class="lbl" style="left:3602.8px;top:1886.4px">测试绕组</div>
<div class="combo" style="left:3790px;top:1875.6px;width:954.4px">高低两侧</div>
<div class="gb" style="left:2429.6px;top:1986px;width:1150px;height:296.8px"></div>
<div class="a mono" style="left:2458px;top:1962.4px;background:#f0f0f0;padding:0 8px;line-height:48px">Ir</div>
<div class="gb" style="left:3602.8px;top:1986px;width:1153.2px;height:296.8px"></div>
<div class="a mono" style="left:3630px;top:1962.4px;background:#f0f0f0;padding:0 8px;line-height:48px">Id</div>
<div class="lbl" style="left:2460px;top:2029.2px">始值</div>
<div class="inp mono" style="left:2561.2px;top:2017.2px;width:970.4px;padding-right:12.8px">0.500*Ie</div>
<div class="lbl" style="left:2460px;top:2113.52px">末值</div>
<div class="inp mono" style="left:2561.2px;top:2101.52px;width:970.4px;padding-right:12.8px">12.000*Ie</div>
<div class="lbl" style="left:2460px;top:2197.84px">步长</div>
<div class="inp mono" style="left:2561.2px;top:2185.84px;width:970.4px;padding-right:12.8px">0.500*Ie</div>
<div class="lbl" style="left:3634.8px;top:2029.2px">正偏移</div>
<div class="inp mono" style="left:3778px;top:2017.2px;width:928.8px;padding-right:12.8px">0.500*Ie</div>
<div class="lbl" style="left:3634.8px;top:2113.52px">负偏移</div>
<div class="inp mono" style="left:3778px;top:2101.52px;width:928.8px;padding-right:12.8px">0.500*Ie</div>
<div class="lbl" style="left:3634.8px;top:2197.84px">精度</div>
<div class="inp mono" style="left:3778px;top:2185.84px;width:928.8px;padding-right:12.8px">0.050*Ie</div>
<div class="a" style="left:2640px;top:2596px;width:1302px;height:88px;box-sizing:border-box;border-left:4px solid #a0a0a0;border-top:4px solid #a0a0a0;border-right:4px solid #fff;border-bottom:4px solid #fff"></div>
<div class="a" style="left:3960px;top:2596px;width:192px;height:88px;box-sizing:border-box;border-left:4px solid #a0a0a0;border-top:4px solid #a0a0a0;border-right:4px solid #fff;border-bottom:4px solid #fff"></div>
<div class="a" style="left:4171.2px;top:2596px;width:90px;height:88px;box-sizing:border-box;border-left:4px solid #a0a0a0;border-top:4px solid #a0a0a0;border-right:4px solid #fff;border-bottom:4px solid #fff"></div>
<div class="a" style="left:4264px;top:2596px;width:424px;height:88px;box-sizing:border-box;border-left:4px solid #a0a0a0;border-top:4px solid #a0a0a0;border-right:4px solid #fff;border-bottom:4px solid #fff"></div>
<div class="a" style="left:4705.6px;top:2596px;width:88.8px;height:88px;box-sizing:border-box;border-left:4px solid #a0a0a0;border-top:4px solid #a0a0a0;border-right:4px solid #fff;border-bottom:4px solid #fff"></div>
<div class="lbl" style="left:2677.6px;top:2620.8px">开入<span class="mono">:</span></div>
<div class="lbl" style="left:3323.2px;top:2620.8px">开出<span class="mono">:</span></div>
<div class="lbl" style="left:3980.8px;top:2617.6px;font-size:41.6px;letter-spacing:1px;color:#222">00:00:00</div>
<div class="lbl" style="left:4283.2px;top:2616.8px;color:#2a2a2a;"><span style="position:relative;top:-2.4px;font-weight:bold">—</span><span style="position:relative;top:-2.4px;font-weight:bold">—</span><span class="mono">/</span><span style="position:relative;top:-2.4px;font-weight:bold">—</span><span class="mono">/</span><span style="position:relative;top:-2.4px;font-weight:bold">—</span><span class="mono"> </span><span style="position:relative;top:-2.4px;font-weight:bold">—</span><span class="mono">:</span><span style="position:relative;top:-2.4px;font-weight:bold">—</span><span class="mono">:</span><span style="position:relative;top:-2.4px;font-weight:bold">—</span></div>
<svg class="a" style="left:2784px;top:2600px;width:1200px;height:88px" viewBox="696 650 300 22"><g transform="translate(708.80 660)"><ellipse cx="0" cy="6.6" rx="5.6" ry="1.3" fill="#bbb" opacity=".7"/><circle cx="0" cy="0.2" r="5.05" fill="#ececec" stroke="#474747" stroke-width="2.1"/><path d="M-3.6 -3.4L3.6 3.8" stroke="#474747" stroke-width="2.1"/></g><g transform="translate(723.74 660)"><ellipse cx="0" cy="6.6" rx="5.6" ry="1.3" fill="#bbb" opacity=".7"/><circle cx="0" cy="0.2" r="5.05" fill="#ececec" stroke="#474747" stroke-width="2.1"/><path d="M-3.6 -3.4L3.6 3.8" stroke="#474747" stroke-width="2.1"/></g><g transform="translate(738.68 660)"><ellipse cx="0" cy="6.6" rx="5.6" ry="1.3" fill="#bbb" opacity=".7"/><circle cx="0" cy="0.2" r="5.05" fill="#ececec" stroke="#474747" stroke-width="2.1"/><path d="M-3.6 -3.4L3.6 3.8" stroke="#474747" stroke-width="2.1"/></g><g transform="translate(753.62 660)"><path d="M-6.7 3.3H-5.1V-0.5H-3.3V5.7H-6.7ZM3.6 -2H5.5V3.3H7.1V5.7H3.6Z" fill="#0a820a"/><path d="M-4 -5.3L4.6 -1.3" stroke="#0a820a" stroke-width="1.8" stroke-linecap="square" fill="none"/></g><g transform="translate(768.56 660)"><ellipse cx="0" cy="6.6" rx="5.6" ry="1.3" fill="#bbb" opacity=".7"/><circle cx="0" cy="0.2" r="5.05" fill="#ececec" stroke="#474747" stroke-width="2.1"/><path d="M-3.6 -3.4L3.6 3.8" stroke="#474747" stroke-width="2.1"/></g><g transform="translate(783.50 660)"><ellipse cx="0" cy="6.6" rx="5.6" ry="1.3" fill="#bbb" opacity=".7"/><circle cx="0" cy="0.2" r="5.05" fill="#ececec" stroke="#474747" stroke-width="2.1"/><path d="M-3.6 -3.4L3.6 3.8" stroke="#474747" stroke-width="2.1"/></g><g transform="translate(798.44 660)"><path d="M-6.7 3.3H-5.1V-0.5H-3.3V5.7H-6.7ZM3.6 -2H5.5V3.3H7.1V5.7H3.6Z" fill="#0a820a"/><path d="M-4 -5.3L4.6 -1.3" stroke="#0a820a" stroke-width="1.8" stroke-linecap="square" fill="none"/></g><g transform="translate(813.38 660)"><ellipse cx="0" cy="6.6" rx="5.6" ry="1.3" fill="#bbb" opacity=".7"/><circle cx="0" cy="0.2" r="5.05" fill="#ececec" stroke="#474747" stroke-width="2.1"/><path d="M-3.6 -3.4L3.6 3.8" stroke="#474747" stroke-width="2.1"/></g><g transform="translate(869.30 660)"><ellipse cx="0" cy="6.6" rx="5.6" ry="1.3" fill="#bbb" opacity=".7"/><circle cx="0" cy="0.2" r="5.05" fill="#ececec" stroke="#474747" stroke-width="2.1"/><path d="M-3.6 -3.4L3.6 3.8" stroke="#474747" stroke-width="2.1"/></g><g transform="translate(884.24 660)"><ellipse cx="0" cy="6.6" rx="5.6" ry="1.3" fill="#bbb" opacity=".7"/><circle cx="0" cy="0.2" r="5.05" fill="#ececec" stroke="#474747" stroke-width="2.1"/><path d="M-3.6 -3.4L3.6 3.8" stroke="#474747" stroke-width="2.1"/></g><g transform="translate(899.18 660)"><ellipse cx="0" cy="6.6" rx="5.6" ry="1.3" fill="#bbb" opacity=".7"/><circle cx="0" cy="0.2" r="5.05" fill="#ececec" stroke="#474747" stroke-width="2.1"/><path d="M-3.6 -3.4L3.6 3.8" stroke="#474747" stroke-width="2.1"/></g><g transform="translate(914.12 660)"><ellipse cx="0" cy="6.6" rx="5.6" ry="1.3" fill="#bbb" opacity=".7"/><circle cx="0" cy="0.2" r="5.05" fill="#ececec" stroke="#474747" stroke-width="2.1"/><path d="M-3.6 -3.4L3.6 3.8" stroke="#474747" stroke-width="2.1"/></g><g transform="translate(929.06 660)"><ellipse cx="0" cy="6.6" rx="5.6" ry="1.3" fill="#bbb" opacity=".7"/><circle cx="0" cy="0.2" r="5.05" fill="#ececec" stroke="#474747" stroke-width="2.1"/><path d="M-3.6 -3.4L3.6 3.8" stroke="#474747" stroke-width="2.1"/></g><g transform="translate(944.00 660)"><ellipse cx="0" cy="6.6" rx="5.6" ry="1.3" fill="#bbb" opacity=".7"/><circle cx="0" cy="0.2" r="5.05" fill="#ececec" stroke="#474747" stroke-width="2.1"/><path d="M-3.6 -3.4L3.6 3.8" stroke="#474747" stroke-width="2.1"/></g><g transform="translate(958.94 660)"><ellipse cx="0" cy="6.6" rx="5.6" ry="1.3" fill="#bbb" opacity=".7"/><circle cx="0" cy="0.2" r="5.05" fill="#ececec" stroke="#474747" stroke-width="2.1"/><path d="M-3.6 -3.4L3.6 3.8" stroke="#474747" stroke-width="2.1"/></g><g transform="translate(973.88 660)"><ellipse cx="0" cy="6.6" rx="5.6" ry="1.3" fill="#bbb" opacity=".7"/><circle cx="0" cy="0.2" r="5.05" fill="#ececec" stroke="#474747" stroke-width="2.1"/><path d="M-3.6 -3.4L3.6 3.8" stroke="#474747" stroke-width="2.1"/></g></svg>
<svg class="a" style="left:4160px;top:2584px;width:640px;height:120px" viewBox="1040 646 160 30"><defs><radialGradient id="gGl" cx=".38" cy=".62" r=".62"><stop offset="0" stop-color="#d8efff"/><stop offset=".45" stop-color="#6fb0f0"/><stop offset="1" stop-color="#1c56c8"/></radialGradient>
<linearGradient id="gMo" x1="0" y1="0" x2="1" y2="1"><stop offset="0" stop-color="#1874d0"/><stop offset=".5" stop-color="#4cb0f0"/><stop offset="1" stop-color="#1880d8"/></linearGradient>
</defs><circle cx="1055.6" cy="661.4" r="8.9" fill="url(#gGl)"/><ellipse cx="1055" cy="669.6" rx="6" ry="1.2" fill="#b0b0b0" opacity=".6"/><circle cx="1049.5" cy="655.7" r="5.2" fill="#fbfbff" stroke="#3c8c3c" stroke-width="1.6"/><path d="M1049.3 652.2V656.2L1050.4 657.4" stroke="#3a62d0" stroke-width=".9" fill="none"/><path d="M1050 655.6L1052.4 654.6" stroke="#d04040" stroke-width=".7" fill="none"/><g transform="translate(1059.4 665.3)"><circle cx="0" cy="0" r="5.3" fill="#de3420"/><circle cx="0" cy="-1.2" r="3.8" fill="#f06858" opacity=".45"/><path d="M-2.2 -2.2L2.2 2.2M2.2 -2.2L-2.2 2.2" stroke="#fff" stroke-width="1.9" stroke-linecap="round"/></g><ellipse cx="1186.4" cy="668.4" rx="5.6" ry="1.9" fill="#bcbcbc"/><path d="M1184.6 664h3.8l.8 4h-5.4Z" fill="#d0d0d0"/><rect x="1177.8" y="650" width="19.8" height="14.2" rx=".8" fill="#d9dadc"/><rect x="1179.3" y="651" width="16.9" height="12" fill="url(#gMo)"/><path d="M1179.3 651H1184.4V654.4L1179.3 656Z" fill="#0c50a8" opacity=".45"/><path d="M1179.3 658.4C1185 656.4 1190 655.6 1196.2 653V651H1186L1179.3 655Z" fill="#fff" opacity=".16"/><g transform="translate(1192.5 665.3)"><circle cx="0" cy="0" r="5.3" fill="#de3420"/><circle cx="0" cy="-1.2" r="3.8" fill="#f06858" opacity=".45"/><path d="M-2.2 -2.2L2.2 2.2M2.2 -2.2L-2.2 2.2" stroke="#fff" stroke-width="1.9" stroke-linecap="round"/></g></svg>
</div></body></html>
